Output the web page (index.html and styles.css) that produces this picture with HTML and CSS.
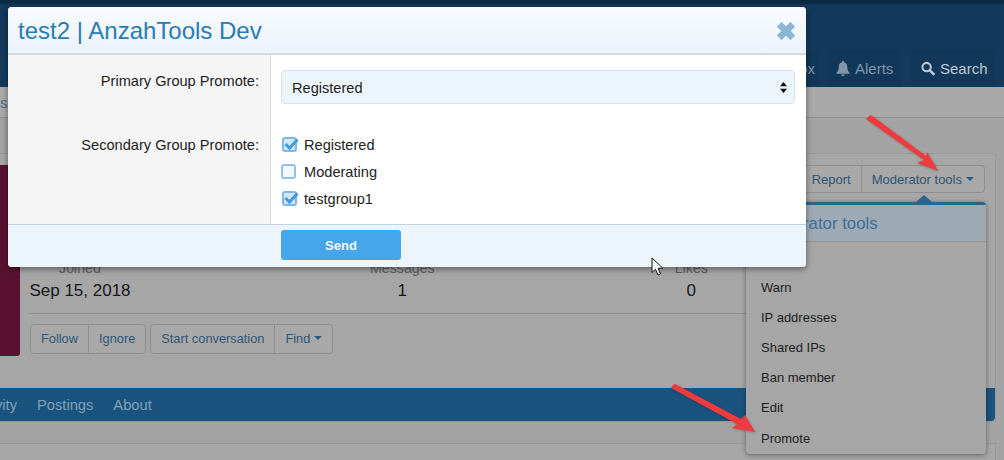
FILE: index.html
```html
<!DOCTYPE html>
<html lang="en">
<head>
<meta charset="utf-8">
<title>test2 | AnzahTools Dev</title>
<link rel="stylesheet" href="styles.css">
</head>
<body>
<div class="page">
  <header class="site-header">
    <nav class="top-nav">
      <a class="top-tab inbox">Inbox</a>
      <a class="top-tab alerts">
        <svg class="nav-icon" viewBox="0 0 14 16"><path d="M7 0c.8 0 1.2.5 1.2 1.2C10.600 1.800 11.500 3.700 11.500 6c0 3.500 1 4.800 2.500 6.500v1H0v-1C1.500 10.800 2.500 9.500 2.500 6c0-2.300.9-4.200 3.300-4.800C5.800.5 6.200 0 7 0zM5.200 14.300h3.600C8.700 15.300 8 16 7 16s-1.700-.7-1.800-1.700z"/></svg>
        Alerts</a>
      <a class="top-tab search">
        <svg class="nav-icon" viewBox="0 0 15 15"><circle cx="6" cy="6" r="4.500" fill="none" stroke="currentColor" stroke-width="2.200"/><path d="M9.500 9.500L13.500 13.500" stroke="currentColor" stroke-width="2.800" stroke-linecap="round"/></svg>
        Search</a>
    </nav>
  </header>
  <div class="sub-nav"><span>s</span></div>

  <main class="profile-wrap">
    <section class="profile-card">
      <div class="profile-row">
        <div class="avatar"></div>
        <div class="profile-info">
          <div class="toolbar">
            <div class="btn-group">
              <a class="btn">Report</a>
              <a class="btn">Moderator tools<i class="caret"></i></a>
            </div>
          </div>
          <div class="stats">
            <div class="stat stat-joined"><span class="stat-label">Joined</span><span class="stat-value">Sep 15, 2018</span></div>
            <div class="stat"><span class="stat-label">Messages</span><span class="stat-value">1</span></div>
            <div class="stat"><span class="stat-label">Likes</span><span class="stat-value">0</span></div>
          </div>
          <div class="actions">
            <div class="btn-group">
              <a class="btn">Follow</a>
              <a class="btn">Ignore</a>
            </div>
            <div class="btn-group">
              <a class="btn">Start conversation</a>
              <a class="btn">Find<i class="caret"></i></a>
            </div>
          </div>
        </div>
      </div>
      <nav class="tabs-bar">
        <a class="tab tab-cut">Activity</a>
        <a class="tab">Postings</a>
        <a class="tab">About</a>
      </nav>
    </section>
    <section class="lower-card"></section>
  </main>

  <div class="mod-menu">
    <i class="menu-notch"></i>
    <h3 class="menu-title">Moderator tools</h3>
    <ul class="menu-list">
      <li>Spam</li>
      <li>Warn</li>
      <li>IP addresses</li>
      <li>Shared IPs</li>
      <li>Ban member</li>
      <li>Edit</li>
      <li>Promote</li>
    </ul>
  </div>

  <svg class="arrow arrow-one" viewBox="0 0 80 60"><path d="M2.500 1.500L5 0 60 41 61 37 72 56 51 48 58 45 0 4z"/></svg>
  <svg class="arrow arrow-two" viewBox="0 0 90 52"><path d="M2 1L4 0 70 35 74 31 84 48 61 44 66 40 0 4z"/></svg>

  <div class="modal" role="dialog">
    <div class="modal-head">
      <h2 class="modal-title">test2 | AnzahTools Dev</h2>
      <svg class="modal-close" viewBox="0 0 18 18"><path d="M1.500 5L5 1.500 9 5.500 13 1.500 16.500 5 12.500 9 16.500 13 13 16.500 9 12.500 5 16.500 1.500 13 5.500 9z" stroke="#8db6d6" stroke-width="1" stroke-linejoin="round"/></svg>
    </div>
    <div class="modal-body">
      <div class="form-row row-select">
        <label class="form-label">Primary Group Promote:</label>
        <div class="form-field">
          <div class="select">
            <span>Registered</span>
            <svg class="select-arrows" viewBox="0 0 7 11"><path d="M3.500 0L7 4.300H0zM3.500 11L0 6.700H7z"/></svg>
          </div>
        </div>
      </div>
      <div class="form-row row-checks">
        <label class="form-label">Secondary Group Promote:</label>
        <div class="form-field checks">
          <div class="check-row">
            <span class="check on"><svg viewBox="0 0 18 16"><path d="M3.500 7L7.500 11 15.500 2.500" /></svg></span>Registered
          </div>
          <div class="check-row"><span class="check"></span>Moderating</div>
          <div class="check-row">
            <span class="check on"><svg viewBox="0 0 18 16"><path d="M3.500 7L7.500 11 15.500 2.500" /></svg></span>testgroup1
          </div>
        </div>
      </div>
    </div>
    <div class="modal-foot"><button class="send">Send</button></div>
  </div>

  <svg class="cursor" viewBox="0 0 13 19"><path d="M1 1V15.500L4.500 12.200 7 18 9.500 17 7 11.200H11.800z" fill="#fff" stroke="#111" stroke-width="1"/></svg>
</div>
</body>
</html>
```

FILE: styles.css
```css
* { box-sizing: border-box; }
html, body { margin: 0; height: 100%; }
body {
  background: #a3a3a3;
  font-family: "Liberation Sans", Arial, sans-serif;
  font-size: 13px;
  color: #1d1d1d;
  overflow: hidden;
}
.page { position: relative; width: 1004px; height: 460px; overflow: hidden; }

.site-header {
  height: 87px;
  background: linear-gradient(#0a2a44 0, #0a2a44 3px, #13395c 5px, #133a5d 100%);
  display: flex;
  justify-content: flex-end;
  align-items: flex-end;
  padding-right: 9px;
}
.top-nav { display: flex; height: 37px; gap: 9px; }
.top-tab {
  display: flex;
  align-items: center;
  gap: 5px;
  font-size: 15px;
  background: #113759;
  color: #7f96aa;
}
.inbox { padding: 0 4px 0 8px; width: 60px; justify-content: flex-end; }
.alerts { padding: 0 10px 0 9px; width: 75px; margin-left: -1px; }
.search { padding: 0 8px 0 10px; width: 84px; color: #bccad6; }
.nav-icon { width: 14px; height: 15px; fill: currentColor; flex: none; }

.sub-nav {
  height: 31px;
  border-bottom: 1px solid #8e8e8e;
  font-size: 15px;
  line-height: 31px;
  color: #4d6d86;
  background: #a9a9a9;
}

.profile-wrap { padding: 35px 8px 0 0; }
.profile-card {
  border: 1px solid #999;
  border-left: 0;
  border-radius: 0 4px 0 0;
  background: #a6a6a6;
  padding-top: 11px;
}
.profile-row { display: flex; height: 224px; }
.avatar {
  width: 20px;
  height: 191px;
  background: #58122f;
  border-radius: 0 3px 3px 0;
  flex: none;
}
.profile-info {
  flex: 1;
  padding-left: 10px;
  padding-right: 10px;
  display: flex;
  flex-direction: column;
}
.toolbar { display: flex; justify-content: flex-end; height: 95px; }
.toolbar .btn-group { height: 28px; }
.btn-group {
  display: flex;
  height: 30px;
  border: 1px solid #8f8f8f;
  border-radius: 4px;
  background: #a8a8a8;
}
.btn {
  display: flex;
  align-items: center;
  gap: 4px;
  padding: 0 10px;
  color: #2f5675;
  white-space: nowrap;
  border-left: 1px solid #8f8f8f;
}
.actions .btn { padding-bottom: 2px; font-size: 12.800px; }
.btn:first-child { border-left: 0; }
.caret {
  display: inline-block;
  width: 0;
  height: 0;
  border: 4px solid transparent;
  border-top: 4px solid #2a5d86;
  border-bottom: 0;
}
.stats {
  display: flex;
  gap: 240px;
  height: 53px;
  padding-right: 220px;
}
.stat { display: flex; flex-direction: column; align-items: center; }
.stat-label { font-size: 14.200px; line-height: 17px; color: #5f5f5f; }
.stat-value { font-size: 17px; line-height: 24px; margin-top: 2px; color: #161616; white-space: nowrap; }
.stat-joined { width: 100px; }
.actions {
  display: flex;
  gap: 4px;
  border-top: 1px solid #8f8f8f;
  padding-top: 10px;
  margin-right: 200px;
}
.tabs-bar {
  height: 33px;
  background: #19537e;
  border-radius: 0 0 4px 0;
  display: flex;
  align-items: center;
  gap: 20px;
  margin-top: -1px;
}
.tab { font-size: 14.700px; color: #7fa2bd; }
.tab-cut { width: 17px; overflow: hidden; direction: rtl; white-space: nowrap; }
.lower-card {
  margin-top: 21px;
  height: 40px;
  border: 1px solid #999;
  border-left: 0;
  background: #a6a6a6;
}

.mod-menu {
  position: absolute;
  left: 746px;
  top: 202px;
  width: 240px;
  height: 252px;
  background: #a6a6a6;
  border-top: 3px solid #2a658f;
  border-radius: 4px;
  box-shadow: 0 1px 5px rgba(0,0,0,.4);
}
.menu-notch {
  position: absolute;
  left: 170px;
  top: -10px;
  border: 8px solid transparent;
  border-top: 0;
  border-bottom: 7px solid #2a658f;
}
.menu-title {
  margin: 0;
  height: 37px;
  padding-left: 15px;
  font-size: 16.800px;
  font-weight: 400;
  line-height: 38px;
  color: #3a6f99;
  background: #9eaab3;
  border-bottom: 1px solid #939393;
}
.menu-list { list-style: none; margin: 0; padding: 1px 0 0; }
.menu-list li {
  height: 30.100px;
  line-height: 30px;
  padding-left: 15px;
  color: #1d1d1d;
}

.arrow { position: absolute; fill: #ef3b3e; filter: drop-shadow(1px 1px 1px rgba(0,0,0,.25)); }
.arrow-one { left: 866px; top: 115px; width: 80px; height: 60px; }
.arrow-two { left: 671px; top: 384px; width: 90px; height: 52px; }
.cursor { position: absolute; left: 651px; top: 257px; width: 13px; height: 19px; }

.modal {
  position: absolute;
  left: 8px;
  top: 7px;
  width: 798px;
  height: 260px;
  border-radius: 4px;
  background: #fff;
  overflow: hidden;
  box-shadow: 0 2px 6px rgba(0,0,0,.45);
  display: flex;
  flex-direction: column;
}
.modal-head {
  height: 48px;
  flex: none;
  background: linear-gradient(#f8fbfe, #eaf3fb);
  border-bottom: 2px solid #d8d8d8;
  display: flex;
  align-items: center;
  justify-content: space-between;
  padding: 2px 10px 0 10px;
}
.modal-title { margin: 0; font-size: 24px; font-weight: 400; color: #2a7bb1; }
.modal-close { width: 20px; height: 20px; fill: #8db6d6; }
.modal-body { flex: 1; border-bottom: 1px solid #c3d2e0; display: flex; flex-direction: column; background: linear-gradient(90deg, #f5f5f5 262px, #dcdcdc 262px, #dcdcdc 263px, #fff 263px); }
.form-row { display: flex; font-size: 14.600px; }
.form-label { width: 251px; text-align: right; flex: none; color: #1d1d1d; }
.form-field { margin-left: 22px; width: 514px; }
.row-select { height: 74px; padding-top: 15px; }
.row-select .form-label { line-height: 22px; }
.row-checks { flex: 1; }
.row-checks .form-label { line-height: 16px; padding-top: 8px; }
.select {
  height: 34px;
  background: #edf5fc;
  border: 1px solid #d6e2ec;
  border-radius: 4px;
  display: flex;
  align-items: center;
  justify-content: space-between;
  padding: 1px 7px 0 10px;
}
.select-arrows { width: 7px; height: 11px; fill: #111; }
.checks { display: flex; flex-direction: column; padding-top: 2px; }
.check-row { display: flex; align-items: center; height: 27px; gap: 8px; }
.check {
  position: relative;
  width: 15px;
  height: 15px;
  border: 2px solid #8fc3ec;
  border-radius: 3px;
  background: #f2f8fd;
  flex: none;
}
.check.on { background: #d3e7f7; border-color: #7cb8e8; margin-left: 1px; margin-right: -1px; }
.check svg { position: absolute; left: -2px; top: -2px; width: 18px; height: 16px; }
.check svg path { fill: none; stroke: #3f9ae2; stroke-width: 3; }
.modal-foot {
  height: 42px;
  flex: none;
  background: #edf5fc;
  padding: 5px 0 0 273px;
}
.send {
  display: block;
  width: 120px;
  height: 30px;
  border: 0;
  border-radius: 3px;
  background: #46a6ea;
  color: #f1f8fe;
  font-family: inherit;
  font-size: 13px;
  font-weight: 700;
}
```
